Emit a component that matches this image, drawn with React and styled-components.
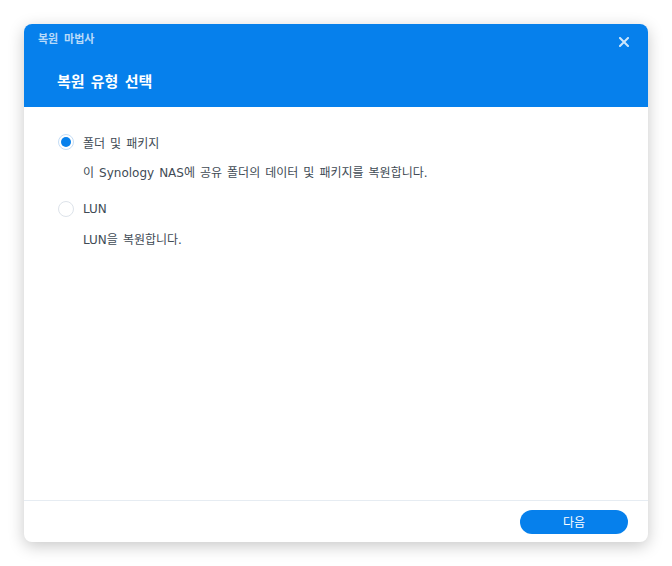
import React, { useState } from "react";
import styled, { createGlobalStyle } from "styled-components";

const Global = createGlobalStyle`
  html, body { margin: 0; padding: 0; background: #ffffff; }
  body { font-family: "DejaVu Sans", "Noto Sans CJK KR", sans-serif; }
  * { box-sizing: border-box; }
`;

const Page = styled.div`
  width: 672px;
  height: 566px;
  padding: 24px 24px 0 24px;
`;

const Dialog = styled.div`
  width: 624px;
  height: 518px;
  background: #fff;
  border-radius: 8px;
  box-shadow: 0 4px 16px rgba(0, 0, 0, 0.22);
  display: flex;
  flex-direction: column;
  overflow: hidden;
`;

const Header = styled.div`
  height: 83px;
  background: #0680ec;
  position: relative;
  padding: 8px 14px 0 14px;
  display: flex;
  flex-direction: column;
`;

const WindowTitle = styled.div`
  font-size: 11px;
  font-weight: 700;
  color: rgba(255, 255, 255, 0.72);
  line-height: 16px;
  word-spacing: 2px;
`;

const StepTitle = styled.div`
  margin-top: 23px;
  margin-left: 19px;
  font-size: 15px;
  font-weight: 700;
  color: #fff;
  line-height: 22px;
  word-spacing: 1px;
`;

const Close = styled.button`
  position: absolute;
  top: 11px;
  right: 17px;
  width: 14px;
  height: 14px;
  padding: 0;
  border: none;
  background: transparent;
  display: flex;
  align-items: center;
  justify-content: center;
`;

const Body = styled.div`
  flex: 1;
  padding: 26px 34px 0 34px;
  display: flex;
  flex-direction: column;
`;

const Option = styled.label`
  display: flex;
  align-items: center;
  gap: 9px;
  height: 18px;
  font-size: 12px;
  color: #414b55;
  word-spacing: 1.2px;
  cursor: pointer;
`;

const Radio = styled.span`
  width: 16px;
  height: 16px;
  border-radius: 50%;
  border: 1px solid ${(p) => (p.$checked ? "#c4ddf6" : "#dde3ea")};
  background: #fff;
  display: flex;
  align-items: center;
  justify-content: center;
  &::after {
    content: "";
    width: 10px;
    height: 10px;
    border-radius: 50%;
    background: ${(p) => (p.$checked ? "#0680ec" : "transparent")};
  }
`;

const Desc = styled.div`
  margin: 13px 0 ${(p) => p.$gap}px 25px;
  font-size: 12px;
  color: #414b55;
  line-height: 18px;
  word-spacing: 1.2px;
`;

const Footer = styled.div`
  height: 42px;
  border-top: 1px solid #e6ecf2;
  display: flex;
  align-items: center;
  justify-content: flex-end;
  padding-right: 20px;
`;

const NextButton = styled.button`
  width: 108px;
  height: 24px;
  border: none;
  border-radius: 12px;
  background: #0680ec;
  color: #fff;
  font-family: inherit;
  font-size: 12px;
  padding: 0;
  cursor: pointer;
`;

export default function App() {
  const [value, setValue] = useState("folder");
  return (
    <>
      <Global />
      <Page>
        <Dialog>
          <Header>
            <WindowTitle>복원 마법사</WindowTitle>
            <StepTitle>복원 유형 선택</StepTitle>
            <Close aria-label="close">
              <svg width="10" height="10" viewBox="0 0 10 10">
                <path d="M1 1 L9 9 M9 1 L1 9" stroke="rgba(255,255,255,0.8)" strokeWidth="2" strokeLinecap="square" />
              </svg>
            </Close>
          </Header>
          <Body>
            <Option onClick={() => setValue("folder")}>
              <Radio $checked={value === "folder"} />
              폴더 및 패키지
            </Option>
            <Desc $gap={18}>이 Synology NAS에 공유 폴더의 데이터 및 패키지를 복원합니다.</Desc>
            <Option onClick={() => setValue("lun")}>
              <Radio $checked={value === "lun"} />
              LUN
            </Option>
            <Desc $gap={0}>LUN을 복원합니다.</Desc>
          </Body>
          <Footer>
            <NextButton>다음</NextButton>
          </Footer>
        </Dialog>
      </Page>
    </>
  );
}
